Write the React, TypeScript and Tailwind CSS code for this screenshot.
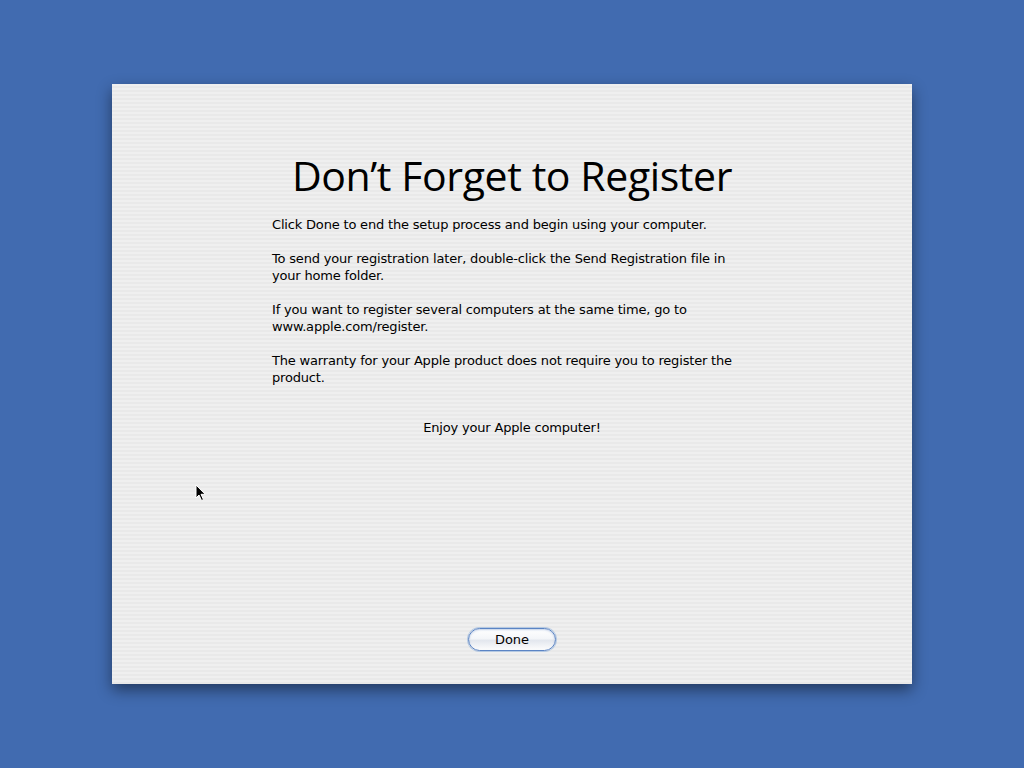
export default function App() {
  return (
    <div className="relative w-[1024px] h-[768px] bg-[#416bb0] flex items-center justify-center overflow-hidden">
      <div
        className="w-[800px] h-[600px] flex flex-col items-center shadow-[0_6px_14px_rgba(0,0,0,0.45)] bg-[repeating-linear-gradient(to_bottom,#efefef_0px,#efefef_2px,#e9e9e9_2px,#e9e9e9_4px)]"
      >
        <h1 className="mt-[66px] text-[41px] leading-[50px] text-black font-['Open_Sans',sans-serif] tracking-[-0.4px]">
          Don’t Forget to Register
        </h1>
        <div className="mt-[16px] w-[480px] text-[13px] leading-[17px] text-black font-['DejaVu_Sans',sans-serif] tracking-[-0.18px] flex flex-col gap-[17px]">
          <p>Click Done to end the setup process and begin using your computer.</p>
          <p>To send your registration later, double-click the Send Registration file in your home folder.</p>
          <p>If you want to register several computers at the same time, go to www.apple.com/register.</p>
          <p>The warranty for your Apple product does not require you to register the product.</p>
          <p className="mt-[16px] text-center">Enjoy your Apple computer!</p>
        </div>
        <div className="flex-1" />
        <button className="mb-[33px] w-[88px] h-[23px] rounded-full border border-[#5b84c4] bg-[linear-gradient(to_bottom,#ffffff_0%,#f4f6f9_45%,#e3e7ee_55%,#fdfdfd_100%)] shadow-[0_0_0_1px_rgba(130,170,220,0.5),inset_0_1px_2px_rgba(80,120,190,0.35)] text-[13px] leading-[21px] text-black font-['DejaVu_Sans',sans-serif]">
          Done
        </button>
      </div>
      <svg className="absolute left-[195px] top-[484px]" width="12" height="18" viewBox="0 0 12 18">
        <path d="M1 1 L1 14 L4 11 L6.5 16.5 L8.5 15.6 L6 10.3 L10.2 10.3 Z" fill="#000" stroke="#fff" strokeWidth="1" />
      </svg>
    </div>
  );
}
